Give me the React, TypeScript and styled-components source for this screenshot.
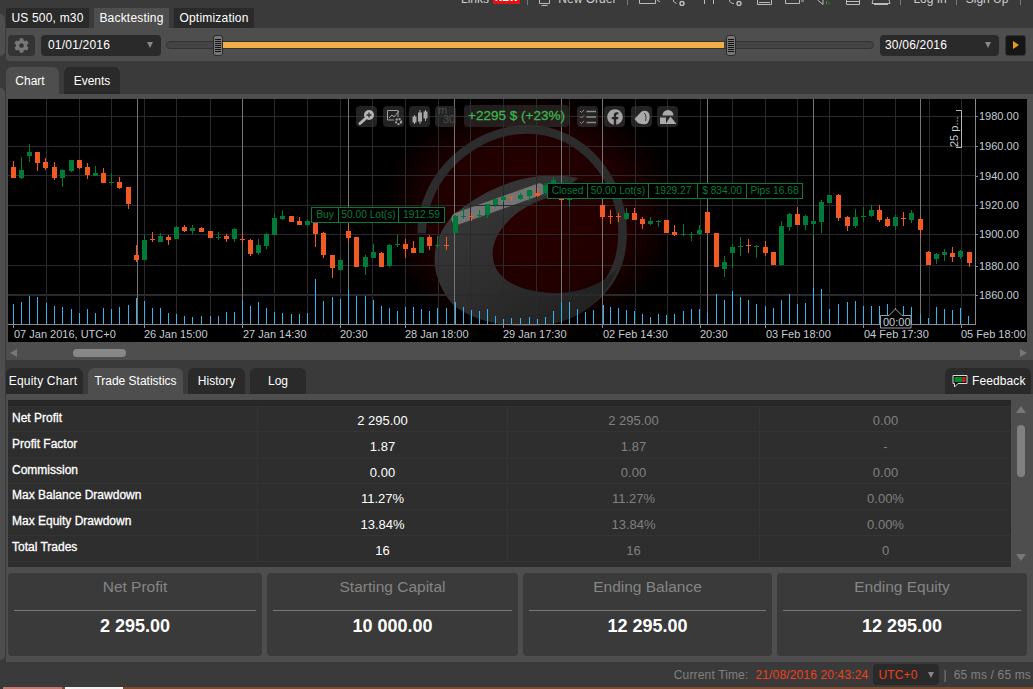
import styled, { createGlobalStyle } from 'styled-components';
import { FaCog, FaFacebook } from 'react-icons/fa';

type Candle = [number, number, number, number, number, number];
type Bar = [number, number];

// [x, wickTop, wickBottom, bodyTop, bodyBottom, green] read off the picture at 3x
const LEFT: Candle[] = [
    [40, 93, 144, 111, 144, 0], [64, 81, 147, 120, 144, 1], [88, 42, 96, 66, 78, 1], [112, 66, 123, 66, 99, 0],
    [136, 84, 120, 96, 114, 0], [163, 96, 150, 111, 144, 0], [187, 117, 171, 120, 144, 1], [212, 90, 126, 90, 123, 1],
    [238, 90, 117, 90, 114, 0], [262, 99, 147, 111, 135, 0], [286, 108, 138, 129, 138, 1], [310, 114, 160, 129, 159, 0],
    [334, 129, 165, 156, 159, 1], [358, 141, 177, 156, 174, 0], [385, 171, 237, 171, 222, 0], [409, 345, 396, 375, 390, 0],
    [433, 315, 390, 330, 390, 1], [457, 306, 336, 327, 330, 0], [481, 309, 336, 318, 336, 1], [505, 315, 345, 321, 330, 0],
    [529, 288, 327, 291, 327, 1], [553, 285, 306, 291, 303, 0], [577, 285, 312, 294, 303, 1], [604, 291, 306, 294, 306, 0],
    [631, 303, 324, 303, 324, 0], [655, 306, 330, 321, 324, 1], [679, 312, 336, 318, 327, 0], [703, 294, 336, 297, 327, 1],
    [727, 309, 342, 327, 330, 0], [751, 327, 378, 330, 372, 0], [775, 327, 375, 345, 369, 1], [799, 309, 357, 312, 348, 1],
    [823, 252, 315, 264, 315, 1], [847, 240, 270, 258, 267, 1], [874, 258, 276, 258, 276, 0], [898, 261, 285, 273, 285, 0],
    [922, 270, 288, 273, 285, 1], [946, 279, 351, 279, 312, 0], [970, 306, 384, 309, 375, 0], [997, 375, 444, 375, 414, 0],
];
const MIDDLE: Candle[] = [
    [0, 478, 512, 480, 510, 1], [25, 375, 425, 393, 414, 0], [48, 411, 500, 411, 500, 0], [76, 465, 525, 472, 500, 1],
    [100, 432, 474, 456, 474, 1], [124, 456, 500, 459, 500, 0], [148, 432, 500, 435, 498, 1], [172, 405, 441, 432, 435, 1],
    [196, 417, 474, 432, 447, 0], [220, 423, 459, 444, 459, 0], [244, 411, 459, 411, 459, 1], [268, 405, 450, 411, 438, 0],
    [292, 408, 444, 435, 438, 1], [319, 411, 450, 435, 438, 0], [345, 345, 400, 348, 399, 1], [370, 324, 357, 348, 351, 1],
    [394, 340, 363, 348, 351, 0], [418, 330, 354, 345, 348, 1], [442, 312, 354, 312, 345, 1], [466, 297, 321, 297, 315, 1],
    [490, 288, 306, 291, 300, 1], [514, 288, 303, 291, 294, 0], [540, 280, 300, 285, 297, 1], [566, 270, 303, 270, 288, 1],
    [590, 264, 291, 279, 288, 0], [614, 250, 285, 255, 280, 1], [638, 232, 260, 240, 260, 1], [662, 270, 310, 280, 300, 0],
    [686, 270, 320, 280, 300, 1], [787, 315, 360, 315, 351, 0], [810, 330, 372, 348, 351, 0], [835, 338, 366, 348, 351, 0],
    [859, 324, 360, 339, 357, 1], [883, 324, 360, 339, 360, 0], [907, 351, 387, 357, 372, 0], [931, 351, 375, 363, 372, 1],
    [955, 360, 381, 363, 366, 1], [979, 360, 399, 360, 399, 0], [1003, 375, 408, 396, 405, 0], [1030, 372, 408, 402, 405, 1],
    [1054, 396, 423, 402, 405, 1],
];
const RIGHT: Candle[] = [
    [28, 285, 315, 300, 312, 1], [52, 246, 309, 246, 309, 0], [79, 309, 411, 309, 411, 0], [103, 378, 441, 396, 417, 1],
    [127, 342, 414, 351, 369, 1], [151, 321, 378, 348, 351, 1], [175, 327, 369, 345, 348, 0], [199, 345, 384, 348, 351, 1],
    [226, 333, 378, 351, 369, 0], [250, 366, 405, 366, 405, 0], [274, 273, 405, 288, 405, 1], [298, 249, 303, 252, 291, 1],
    [322, 231, 285, 252, 285, 0], [346, 255, 300, 258, 285, 1], [370, 270, 315, 273, 282, 1], [394, 210, 309, 216, 276, 1],
    [418, 195, 219, 195, 219, 1], [445, 192, 273, 195, 264, 0], [472, 258, 303, 261, 288, 0], [496, 237, 294, 261, 288, 1],
    [520, 231, 276, 258, 261, 1], [544, 225, 261, 240, 258, 1], [568, 225, 276, 240, 270, 0], [592, 261, 291, 267, 288, 0],
    [616, 255, 300, 261, 288, 1], [640, 246, 288, 264, 267, 0], [664, 240, 279, 249, 270, 1], [691, 264, 321, 267, 300, 0],
    [715, 363, 405, 366, 405, 0], [739, 369, 402, 372, 387, 1], [763, 357, 393, 366, 375, 1], [787, 351, 396, 369, 381, 0],
    [811, 361, 387, 363, 381, 1], [838, 366, 411, 366, 399, 0],
];

const VOL_LEFT: Bar[] = [
    [40, 20], [64, 22], [88, 28], [112, 27], [139, 21], [163, 18], [187, 17], [214, 15], [238, 11], [262, 15], [286, 11],
    [310, 16], [334, 15], [358, 17], [385, 19], [409, 26], [433, 23], [457, 16], [481, 16], [505, 11], [529, 10], [553, 8],
    [577, 7], [604, 8], [631, 8], [655, 8], [679, 12], [703, 12], [727, 24], [751, 18], [775, 22], [799, 16], [823, 12],
    [847, 11], [874, 10], [898, 10], [922, 11], [946, 45], [970, 23], [997, 27],
];
const VOL_MIDDLE: Bar[] = [
    [0, 25], [25, 35], [48, 28], [76, 28], [100, 24], [124, 18], [148, 16], [172, 13], [196, 17], [220, 17], [244, 15],
    [268, 13], [292, 16], [319, 16], [345, 22], [370, 17], [394, 14], [418, 13], [442, 15], [466, 8], [490, 5], [514, 6],
    [540, 6], [566, 7], [590, 5], [614, 7], [638, 13], [662, 22], [686, 22], [710, 15], [736, 12], [760, 14], [788, 19],
    [810, 17], [835, 16], [859, 14], [883, 13], [907, 10], [931, 7], [955, 10], [979, 9], [1003, 10], [1030, 13], [1054, 15],
];
const VOL_RIGHT: Bar[] = [
    [28, 15], [52, 11], [79, 30], [103, 24], [127, 33], [151, 27], [175, 24], [199, 20], [226, 18], [250, 16], [274, 24],
    [298, 30], [322, 20], [346, 21], [370, 36], [394, 35], [418, 15], [445, 20], [472, 22], [496, 23], [520, 18], [544, 18],
    [568, 18], [592, 20], [616, 16], [640, 18], [664, 17], [691, 10], [715, 6], [739, 17], [763, 15], [787, 14], [811, 16],
    [835, 8],
];

const place = (list: Candle[], ox: number, oy: number): Candle[] =>
    list.map(([x, a, b, c, d, g]) => [
        Math.round(ox + x / 3) + 0.5,
        Math.round(oy + a / 3),
        Math.round(oy + b / 3),
        Math.round(oy + c / 3),
        Math.round(oy + d / 3),
        g,
    ]);

const candles = [...place(LEFT, 0, 130), ...place(MIDDLE, 340, 100), ...place(RIGHT, 690, 130)];
const volumes: Bar[] = [
    ...VOL_LEFT.map(([x, h]): Bar => [Math.round(x / 3) + 0.5, h]),
    ...VOL_MIDDLE.map(([x, h]): Bar => [Math.round(340 + x / 3) + 0.5, h]),
    ...VOL_RIGHT.map(([x, h]): Bar => [Math.round(690 + x / 3) + 0.5, h]),
];

const DIM_LINES = [46, 79, 111, 144, 176, 210, 274, 307, 340, 372, 405, 438, 470, 503, 536, 569, 635, 667, 700, 732, 765, 797, 829, 863, 895, 929, 961];
const BRIGHT_LINES = [137, 242, 348, 454, 561, 602, 707, 813, 920];
const H_LINES = [116, 146, 175, 205, 234, 265];
const PRICES: [string, number][] = [['1980.00', 116], ['1960.00', 146], ['1940.00', 176], ['1920.00', 205], ['1900.00', 234], ['1880.00', 266], ['1860.00', 295]];
const DATES: [string, number][] = [
    ['07 Jan 2016, UTC+0', 14], ['26 Jan 15:00', 144], ['27 Jan 14:30', 243], ['20:30', 340], ['28 Jan 18:00', 405],
    ['29 Jan 17:30', 503], ['02 Feb 14:30', 603], ['20:30', 700], ['03 Feb 18:00', 766], ['04 Feb 17:30', 864], ['05 Feb 18:00', 961],
];
const TICKS = [13, 144, 242, 340, 405, 503, 602, 700, 765, 863, 961];

const STATS = [
    { label: 'Net Profit', a: '2 295.00', b: '2 295.00', c: '0.00', h: 25 },
    { label: 'Profit Factor', a: '1.87', b: '1.87', c: '-', h: 27 },
    { label: 'Commission', a: '0.00', b: '0.00', c: '0.00', h: 25 },
    { label: 'Max Balance Drawdown', a: '11.27%', b: '11.27%', c: '0.00%', h: 26 },
    { label: 'Max Equity Drawdown', a: '13.84%', b: '13.84%', c: '0.00%', h: 26 },
    { label: 'Total Trades', a: '16', b: '16', c: '0', h: 26 },
];

const CARDS = [
    { title: 'Net Profit', value: '2 295.00', w: 254 },
    { title: 'Starting Capital', value: '10 000.00', w: 251 },
    { title: 'Ending Balance', value: '12 295.00', w: 249 },
    { title: 'Ending Equity', value: '12 295.00', w: 250 },
];

const PriceChart = () => (
    <ChartSvg viewBox="8 99 1019 243" width="1019" height="243">
        <defs>
            <radialGradient id="glow" cx="50%" cy="50%" r="50%">
                <stop offset="0%" stopColor="#2a0000" />
                <stop offset="65%" stopColor="#200000" />
                <stop offset="100%" stopColor="#000" />
            </radialGradient>
            <linearGradient id="swoosh" x1="0" y1="0" x2="1" y2="1">
                <stop offset="0%" stopColor="#3c3c3c" />
                <stop offset="55%" stopColor="#2c2c2c" />
                <stop offset="100%" stopColor="#1c1c1c" />
            </linearGradient>
        </defs>
        <ellipse cx="530" cy="215" rx="150" ry="125" fill="url(#glow)" />
        <g transform="translate(340 100) scale(0.3333)">
            <path d="M245 400 C245 225 405 88 560 88 C735 88 848 245 848 400 C848 560 720 665 560 665" fill="none" stroke="#2c2c2c" strokeWidth="26" />
            <path d="M340 345 C270 420 262 520 335 610 C410 680 560 690 650 668 C730 650 800 590 835 500 C790 560 690 590 600 575 C520 565 458 530 458 460 C458 390 540 310 640 290 L715 235 C600 205 450 250 340 345 Z" fill="url(#swoosh)" />
            <path d="M352 356 L598 268" stroke="#a0a0a0" strokeOpacity="0.6" strokeWidth="36" strokeLinecap="round" />
        </g>
        {DIM_LINES.map(x => <line key={x} x1={x + 0.5} x2={x + 0.5} y1="99" y2="324" stroke="#2a2a2e" />)}
        {H_LINES.map(y => <line key={y} x1="8" x2="975" y1={y + 0.5} y2={y + 0.5} stroke="#2a2a2e" />)}
        <line x1="8" x2="975" y1="295" y2="295" stroke="#2a2a2e" strokeWidth="2" />
        {BRIGHT_LINES.map(x => <line key={x} x1={x + 0.5} x2={x + 0.5} y1="99" y2="324" stroke="#757575" />)}
        {volumes.map(([x, h], i) => <line key={i} x1={x} x2={x} y1={324 - h} y2="324" stroke="#33b6f2" />)}
        {candles.map(([x, wt, wb, bt, bb, g], i) => {
            const color = g ? '#007a38' : '#f15a24';
            return (
                <g key={i}>
                    <line x1={x} x2={x} y1={wt} y2={wb} stroke={color} />
                    <rect x={x - 2.5} y={bt} width="5" height={Math.max(bb - bt, 1)} fill={color} />
                </g>
            );
        })}
        <line x1="8" x2="975" y1="324.5" y2="324.5" stroke="#8a8a8a" />
        <line x1="975.5" x2="975.5" y1="99" y2="325" stroke="#8a8a8a" />
        {TICKS.map(x => <line key={x} x1={x + 0.5} x2={x + 0.5} y1="325" y2="328" stroke="#8a8a8a" />)}
        {PRICES.map(([p, y]) => (
            <g key={p}>
                <line x1="975" x2="978" y1={y + 0.5} y2={y + 0.5} stroke="#8a8a8a" />
                <AxisText x="979" y={y + 4}>{p}</AxisText>
            </g>
        ))}
        {DATES.map(([d, x], i) => <AxisText key={i} x={x} y="338">{d}</AxisText>)}
        <path d="M956 110.5 H961.5 V147.5 H956" fill="none" stroke="#b8b8b8" />
        <AxisText transform="translate(958 147) rotate(-90)" x="0" y="0">25 p...</AxisText>
        <path d="M880.5 315.5 H889 L895.5 309 L902 315.5 H911 V328 H880.5 Z" fill="#000" stroke="#a0a0a0" />
        <AxisText x="883" y="326">00:00</AxisText>
    </ChartSvg>
);

const ChartTools = () => (
    <>
        <ToolButton $left={348}>
            <svg width="18" height="18" viewBox="0 0 18 18">
                <circle cx="11" cy="7" r="5" fill="#b4b4b4" />
                <path d="M8.500 7h5M11 4.500v5" stroke="#333" strokeWidth="1.400" />
                <path d="M7 11 L2 15.500" stroke="#b4b4b4" strokeWidth="3" strokeLinecap="round" />
            </svg>
        </ToolButton>
        <ToolButton $left={375}>
            <svg width="18" height="18" viewBox="0 0 18 18" fill="none" stroke="#a0a0a0">
                <path d="M13 9V2.500H2.500V12H9" />
                <path d="M4 10l3-3 2 2 5-6" />
                <circle cx="13.500" cy="13.500" r="2.600" strokeWidth="2" strokeDasharray="2 1" />
            </svg>
        </ToolButton>
        <ToolButton $left={401}>
            <svg width="18" height="18" viewBox="0 0 18 18" fill="#a8a8a8" stroke="#a8a8a8">
                <path d="M3.500 7v9M9 2v14M14.500 2v11" />
                <rect x="2" y="9" width="3" height="5" />
                <rect x="7.500" y="5" width="3" height="8" />
                <rect x="13" y="4" width="3" height="6" />
            </svg>
        </ToolButton>
        <PeriodButton $left={427}>m<span>30</span></PeriodButton>
        <ProfitChip>+2295 $ (+23%)</ProfitChip>
        <ToolButton $left={569}>
            <svg width="18" height="18" viewBox="0 0 18 18" fill="none" stroke="#8c8c8c">
                <path d="M7.500 3.500H17M7.500 9H17M7.500 14.500H17" strokeWidth="1.600" />
                <path d="M1 3l1.500 1.500L5 2M1 8.500L2.500 10 5 7.500M1 14l1.500 1.500L5 13" />
            </svg>
        </ToolButton>
        <ToolButton $left={596}>
            <FaFacebook size={16} color="#a4a4a4" />
        </ToolButton>
        <ToolButton $left={623}>
            <svg width="18" height="18" viewBox="0 0 18 18" fill="#aaa">
                <path d="M1.500 11 L8 4 C11 1.500 16 2.500 16.500 7 C17 11 15.500 15.500 13 16 C10 16.500 7 16 5 15 Z" />
                <path d="M11 5 C13 6 13.500 10 12.500 13" stroke="#333" fill="none" />
            </svg>
        </ToolButton>
        <ToolButton $left={649}>
            <svg width="18" height="18" viewBox="0 0 18 18" fill="#aaa">
                <path d="M3.500 7.500 A5.500 5.500 0 0 1 14.500 7.500 Z" />
                <rect x="1" y="9.500" width="6" height="6.500" />
                <path d="M11.500 8.500 L17.500 16 H6.500 Z" />
            </svg>
        </ToolButton>
    </>
);

const App = () => (
    <Page>
        <GlobalStyle />
        <Rail>
            <RailPiece $top={14} $height={42} />
            <RailPiece $top={32} $height={572} />
        </Rail>
        <Main>
            <TopStrip>
                <TopText $gap={455}>Links</TopText>
                <NewBadge>NEW</NewBadge>
                <TopSep $gap={7} />
                <TopGlyphs $gap={10} width="13" height="6" fill="none" stroke="#bbb">
                    <path d="M1.500 0V3.500H11.500V0M3.500 5.500H9.500" />
                </TopGlyphs>
                <TopText $gap={7}>New Order</TopText>
                <TopSep $gap={11} />
                <TopGlyphs $gap={9} width="263" height="6" fill="none" stroke="#bbb">
                    <path d="M2.500 0V3.500H18.500V0M20 0L23 2" />
                    <path d="M36.500 0V1.500L39.500 3.500" />
                    <circle cx="45" cy="3.500" r="2" strokeWidth="1.500" />
                    <path d="M67.500 0V4M76.500 0V4" />
                    <path d="M92.500 0C92.500 2 94 3.500 97 3.500" />
                    <circle cx="102" cy="3.500" r="2" strokeWidth="1.500" />
                    <path d="M120.500 0V4.500H134.500V0M122 2.500H133" />
                    <path d="M148.500 0V3.500H162.500V0M164 1H167" />
                    <path d="M180.500 0L186 4.500V0" />
                    <path d="M189.500 1V4.500M192 2.500V4.500" stroke="#2a9a3a" />
                    <path d="M209.500 0V4.500H222.500V0M209.500 1.500H222.500" />
                    <path d="M236 0L235 3.500H253L252 0M237 4.500H251" />
                </TopGlyphs>
                <TopSep $gap={0} />
                <TopText $gap={12}>Log In</TopText>
                <TopSep $gap={9} />
                <TopText $gap={9}>Sign Up</TopText>
                <TopSep $gap={12} />
            </TopStrip>
            <TabRow $height={20}>
                <Tab $w={83} $spaced>US 500, m30</Tab>
                <Tab $w={75} $active $spaced>Backtesting</Tab>
                <Tab $w={80} $spaced>Optimization</Tab>
            </TabRow>
            <ToolBar>
                <GearButton><FaCog size={15} color="#777" /></GearButton>
                <DateSelect $w={120} $pad={7}>01/01/2016<Caret /></DateSelect>
                <Slider>
                    <SliderFill />
                    <Handle $left={46} />
                    <Handle $left={559} />
                </Slider>
                <DateSelect $w={119} $pad={5}>30/06/2016<Caret /></DateSelect>
                <PlayButton><PlayArrow /></PlayButton>
            </ToolBar>
            <TabRow $height={27} $top={6}>
                <Tab $w={53} $active $round $shift={5}>Chart</Tab>
                <Tab $w={56} $round>Events</Tab>
            </TabRow>
            <ChartPanel>
                <ChartArea>
                    <PriceChart />
                    <ChartTools />
                    <TradeTag $left={303} $top={108}>
                        <TagCell $w={27}>Buy</TagCell>
                        <TagCell $w={60}>50.00 Lot(s)</TagCell>
                        <TagCell $w={45}>1912.59</TagCell>
                    </TradeTag>
                    <TradeTag $left={539} $top={84}>
                        <TagCell $w={40}>Closed</TagCell>
                        <TagCell $w={61}>50.00 Lot(s)</TagCell>
                        <TagCell $w={49}>1929.27</TagCell>
                        <TagCell $w={49}>$ 834.00</TagCell>
                        <TagCell $w={55}>Pips 16.68</TagCell>
                    </TradeTag>
                </ChartArea>
                <ScrollRow>
                    <ArrowLeft />
                    <ScrollThumb />
                    <ArrowRight />
                </ScrollRow>
            </ChartPanel>
            <TabRow $height={26} $top={8}>
                <Tab $w={77} $round $shift={3} $spaced>Equity Chart</Tab>
                <Tab $w={95} $active $round>Trade Statistics</Tab>
                <Tab $w={57} $round>History</Tab>
                <Tab $w={56} $round>Log</Tab>
                <FeedbackTab>
                    <svg width="16" height="14" viewBox="0 0 16 14">
                        <path d="M1 1.500 H15 V9.500 H6 L2.500 13 V9.500 H1 Z" fill="#111" stroke="#ddd" />
                        <rect x="2.500" y="3" width="8" height="5" fill="#0a8a2a" />
                        <rect x="10.500" y="3" width="3" height="5" fill="#d02020" />
                    </svg>
                    Feedback
                </FeedbackTab>
            </TabRow>
            <StatsPanel>
                <StatsTable>
                    <StatsHead />
                    {STATS.map(s => (
                        <StatsRow key={s.label} $h={s.h}>
                            <LabelCell>{s.label}</LabelCell>
                            <ValueCell>{s.a}</ValueCell>
                            <ValueCell $muted>{s.b}</ValueCell>
                            <ValueCell $muted>{s.c}</ValueCell>
                        </StatsRow>
                    ))}
                </StatsTable>
                <StatsScroll>
                    <ArrowUp />
                    <StatsThumb />
                    <ArrowDown />
                </StatsScroll>
            </StatsPanel>
            <CardsPanel>
                {CARDS.map(c => (
                    <Card key={c.title} $w={c.w}>
                        <CardTitle>{c.title}</CardTitle>
                        <CardValue>{c.value}</CardValue>
                    </Card>
                ))}
            </CardsPanel>
            <StatusBar>
                <StatusLabel>Current Time:</StatusLabel>
                <StatusTime>21/08/2016 20:43:24</StatusTime>
                <ZoneSelect>UTC+0<Caret /></ZoneSelect>
                <StatusLabel>|</StatusLabel>
                <StatusLabel>65 ms / 65 ms</StatusLabel>
            </StatusBar>
            <BottomStrip />
        </Main>
        <BottomLeft>
            <BottomChip $color="#c77a70" $w={59} />
            <BottomChip $color="#f4f0ee" $w={58} />
        </BottomLeft>
    </Page>
);

const GlobalStyle = createGlobalStyle`
    html, body {
        margin: 0;
        background: #3a3a3a;
        overflow: hidden;
    }
    * {
        box-sizing: border-box;
    }
`

const Page = styled.div`
    display: flex;
    position: relative;
    width: 1033px;
    height: 689px;
    overflow: hidden;
    background: #3a3a3a;
    font-family: "Liberation Sans", Arial, sans-serif;
    font-size: 12px;
    color: #fff;
`

const Rail = styled.div`
    width: 6px;
    flex: none;
`

const RailPiece = styled.div<{ $top: number, $height: number }>`
    width: 5px;
    margin-top: ${p => p.$top}px;
    height: ${p => p.$height}px;
    background: #4e4e4e;
    border-radius: 0 5px 5px 0;
`

const Main = styled.div`
    flex: 1;
    display: flex;
    flex-direction: column;
    min-width: 0;
`

const TopStrip = styled.div`
    display: flex;
    align-items: flex-start;
    height: 8px;
    overflow: hidden;
    color: #ccc;
`

const TopText = styled.span<{ $gap: number }>`
    margin-top: -8px;
    margin-left: ${p => p.$gap}px;
    line-height: 14px;
    white-space: nowrap;
`

const NewBadge = styled.span`
    margin: -8px 0 0 4px;
    padding: 0 2px;
    height: 12px;
    line-height: 12px;
    font-size: 10px;
    font-weight: bold;
    background: #e01414;
    color: #fff;
`

const TopSep = styled.span<{ $gap: number }>`
    width: 1px;
    height: 5px;
    margin-left: ${p => p.$gap}px;
    background: #777;
`

const TopGlyphs = styled.svg<{ $gap: number }>`
    flex: none;
    margin-left: ${p => p.$gap}px;
`

const TabRow = styled.div<{ $height: number, $top?: number }>`
    display: flex;
    gap: 5px;
    height: ${p => p.$height}px;
    margin-top: ${p => p.$top ?? 0}px;
`

const Tab = styled.div<{ $w: number, $active?: boolean, $round?: boolean, $shift?: number, $spaced?: boolean }>`
    display: flex;
    align-items: center;
    justify-content: center;
    width: ${p => p.$w}px;
    padding-right: ${p => p.$shift ?? 0}px;
    letter-spacing: ${p => (p.$spaced ? '0.2px' : '0')};
    background: ${p => (p.$active ? '#4e4e4e' : '#2a2a2a')};
    border-radius: ${p => (p.$round ? '6px 6px 0 0' : '0')};
    color: #fff;
`

const FeedbackTab = styled.div`
    display: flex;
    align-items: center;
    gap: 4px;
    width: 86px;
    margin-left: auto;
    margin-right: 2px;
    padding-left: 7px;
    letter-spacing: 0.1px;
    background: #2a2a2a;
    border-radius: 6px 6px 0 0;
`

const ToolBar = styled.div`
    display: flex;
    align-items: center;
    gap: 6px;
    height: 33px;
    padding: 1px 7px 0 2px;
    background: #4e4e4e;
    border-radius: 0 0 0 4px;
`

const GearButton = styled.div`
    display: flex;
    align-items: center;
    justify-content: center;
    width: 27px;
    height: 21px;
    background: #333;
    border-radius: 4px;
`

const DateSelect = styled.div<{ $w: number, $pad: number }>`
    display: flex;
    align-items: center;
    justify-content: space-between;
    width: ${p => p.$w}px;
    height: 21px;
    padding: 0 8px 0 ${p => p.$pad}px;
    letter-spacing: 0.2px;
    background: #2a2a2a;
    border-radius: 4px;
`

const Caret = styled.span`
    width: 0;
    height: 0;
    border-left: 3px solid transparent;
    border-right: 3px solid transparent;
    border-top: 6px solid #888;
`

const Slider = styled.div`
    position: relative;
    flex: 1;
    height: 8px;
    margin: 0 0 0 -1px;
    background: #444;
    border: 1px solid #333;
    border-radius: 4px;
`

const SliderFill = styled.div`
    position: absolute;
    left: 52px;
    width: 505px;
    top: 0;
    bottom: 0;
    background: #f2ae46;
`

const Handle = styled.div<{ $left: number }>`
    position: absolute;
    left: ${p => p.$left}px;
    top: -7px;
    width: 10px;
    height: 21px;
    border: 1px solid #2a2a2a;
    border-radius: 3px;
    background: repeating-linear-gradient(#111 0 1px, #777 1px 2px) center / 6px 13px no-repeat, #777;
`

const PlayButton = styled.div`
    display: flex;
    align-items: center;
    justify-content: center;
    width: 21px;
    height: 21px;
    background: #161616;
    border: 1px solid #333;
    border-radius: 3px;
`

const PlayArrow = styled.span`
    width: 0;
    height: 0;
    border-top: 4px solid transparent;
    border-bottom: 4px solid transparent;
    border-left: 6px solid #e89a1c;
`

const ChartPanel = styled.div`
    height: 266px;
    padding: 5px 6px 0 2px;
    background: #4e4e4e;
`

const ChartArea = styled.div`
    position: relative;
    width: 1019px;
    height: 243px;
    background: #000;
    overflow: hidden;
`

const ChartSvg = styled.svg`
    display: block;
`

const AxisText = styled.text`
    font-family: "Liberation Sans", Arial, sans-serif;
    font-size: 11px;
    fill: #c4ccd4;
`

const ToolButton = styled.div<{ $left: number }>`
    position: absolute;
    top: 7px;
    left: ${p => p.$left}px;
    display: flex;
    align-items: center;
    justify-content: center;
    width: 21px;
    height: 21px;
    background: rgba(58, 58, 58, 0.6);
    border-radius: 4px;
`

const PeriodButton = styled(ToolButton)`
    display: block;
    padding: 0 0 0 3px;
    font-size: 11px;
    line-height: 9px;
    color: #4c4c4c;

    span {
        display: block;
        padding-left: 5px;
        font-size: 11px;
    }
`

const ProfitChip = styled.div`
    position: absolute;
    top: 6px;
    left: 456px;
    width: 105px;
    height: 22px;
    line-height: 21px;
    text-align: center;
    font-size: 13.5px;
    color: #3cb54a;
    -webkit-text-stroke: 0.3px #3cb54a;
    background: rgba(50, 50, 50, 0.6);
    border-radius: 4px;
`

const TradeTag = styled.div<{ $left: number, $top: number }>`
    position: absolute;
    left: ${p => p.$left}px;
    top: ${p => p.$top}px;
    display: flex;
    height: 16px;
    background: #000;
    border: 1px solid #0b7a3c;
    font-size: 10.2px;
    line-height: 14px;
    color: #0b7a3c;
`

const TagCell = styled.span<{ $w: number }>`
    width: ${p => p.$w}px;
    text-align: center;
    white-space: nowrap;
    border-right: 1px solid #0b7a3c;

    &:last-child {
        border-right: none;
    }
`

const ScrollRow = styled.div`
    display: flex;
    align-items: center;
    height: 18px;
    padding: 3px 0 0 2px;
`

const ArrowLeft = styled.span`
    width: 0;
    height: 0;
    border-top: 4px solid transparent;
    border-bottom: 4px solid transparent;
    border-right: 7px solid #777;
`

const ArrowRight = styled.span`
    width: 0;
    height: 0;
    margin-left: auto;
    border-top: 4px solid transparent;
    border-bottom: 4px solid transparent;
    border-left: 7px solid #777;
`

const ScrollThumb = styled.div`
    width: 53px;
    height: 8px;
    margin-left: 56px;
    background: #888;
    border-radius: 4px;
`

const StatsPanel = styled.div`
    display: flex;
    height: 176px;
    padding: 6px 2px 3px 2px;
    background: #4e4e4e;
`

const StatsTable = styled.div`
    width: 1003px;
    background: #2e2e2e;
    overflow: hidden;
`

const StatsHead = styled.div`
    height: 7px;
    background: #272727;
    border-bottom: 1px solid #343434;
`

const StatsRow = styled.div<{ $h: number }>`
    display: grid;
    grid-template-columns: 250px 250px 252px 1fr;
    height: ${p => p.$h}px;
    border-bottom: 1px solid #343434;
`

const LabelCell = styled.div`
    display: flex;
    align-items: center;
    padding: 0 0 3px 4px;
    -webkit-text-stroke: 0.3px #fff;
    border-right: 1px solid #343434;
`

const ValueCell = styled.div<{ $muted?: boolean }>`
    display: flex;
    align-items: center;
    justify-content: center;
    padding-top: 3px;
    font-size: 13px;
    color: ${p => (p.$muted ? '#808080' : '#fff')};
    border-right: 1px solid #343434;

    &:last-child {
        border-right: none;
    }
`

const StatsScroll = styled.div`
    display: flex;
    flex-direction: column;
    align-items: center;
    flex: 1;
    padding: 6px 0 0;
`

const ArrowUp = styled.span`
    width: 0;
    height: 0;
    border-left: 5px solid transparent;
    border-right: 5px solid transparent;
    border-bottom: 7px solid #777;
`

const ArrowDown = styled.span`
    width: 0;
    height: 0;
    margin-top: 77px;
    border-left: 5px solid transparent;
    border-right: 5px solid transparent;
    border-top: 7px solid #777;
`

const StatsThumb = styled.div`
    width: 8px;
    height: 52px;
    margin-top: 12px;
    background: #808080;
    border-radius: 4px;
`

const CardsPanel = styled.div`
    display: flex;
    gap: 5px;
    height: 92px;
    padding: 3px 6px 6px 2px;
    background: #4e4e4e;
`

const Card = styled.div<{ $w: number }>`
    width: ${p => p.$w}px;
    padding: 0 6px;
    background: #3a3a3a;
    border-radius: 4px;
    text-align: center;
`

const CardTitle = styled.div`
    height: 38px;
    padding-top: 5px;
    line-height: 18px;
    font-size: 15.5px;
    color: #858585;
    border-bottom: 1px solid #777;
`

const CardValue = styled.div`
    margin-top: 5px;
    line-height: 21px;
    font-size: 18px;
    font-weight: bold;
`

const StatusBar = styled.div`
    display: flex;
    align-items: center;
    justify-content: flex-end;
    gap: 7px;
    height: 25px;
    padding-right: 2px;
    letter-spacing: 0.15px;
`

const StatusLabel = styled.span`
    color: #808080;
`

const StatusTime = styled.span`
    color: #f0401a;
`

const ZoneSelect = styled.div`
    display: flex;
    align-items: center;
    justify-content: space-between;
    width: 66px;
    height: 21px;
    margin: 0 -3px 0 -2px;
    padding: 0 5px;
    background: #2a2a2a;
    border-radius: 4px;
    color: #f0401a;
`

const BottomStrip = styled.div`
    height: 2px;
    background: #7d4a2e;
`

const BottomLeft = styled.div`
    position: absolute;
    left: 3px;
    bottom: 0;
    display: flex;
    gap: 3px;
`

const BottomChip = styled.span<{ $color: string, $w: number }>`
    width: ${p => p.$w}px;
    height: 2px;
    background: ${p => p.$color};
`

export default App;
